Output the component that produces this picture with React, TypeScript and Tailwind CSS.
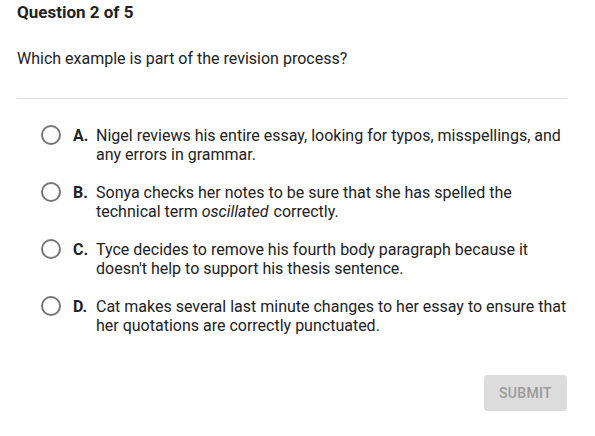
import React from 'react';

const options = [
  { letter: 'A.', text: <>Nigel reviews his entire essay, looking for typos, misspellings, and any errors in grammar.</> },
  { letter: 'B.', text: <>Sonya checks her notes to be sure that she has spelled the technical term <i className="pr-[1px]">oscillated</i> correctly.</> },
  { letter: 'C.', text: <>Tyce decides to remove his fourth body paragraph because it doesn't help to support his thesis sentence.</> },
  { letter: 'D.', text: <>Cat makes several last minute changes to her essay to ensure that her quotations are correctly punctuated.</> },
];

const App = () => {
  return (
    <div className="w-[595px] h-[436px] bg-white text-[#222] font-['Roboto',sans-serif]">
      <div className="px-[17px] w-[584px]">
        <h1 className="text-[17px] font-bold leading-[24px]">Question 2 of 5</h1>
        <p className="text-[16px] leading-[20px] mt-[25px]">Which example is part of the revision process?</p>
        <div className="border-b border-[#dcdcdc] mt-[29px] w-[550px]" />

        {/* Answer choices */}
        <div className="pl-[24px] pt-[27px] flex flex-col gap-[19px]">
          {options.map((o) => (
            <div key={o.letter} className="flex items-start">
              <div className="w-[20px] h-[20px] rounded-full border-2 border-[#777] mt-[-1px] shrink-0" />
              <div className="flex ml-[12px] text-[16px] leading-[19px]">
                <span className="font-bold w-[23px] shrink-0">{o.letter}</span>
                <span>{o.text}</span>
              </div>
            </div>
          ))}
        </div>

        <div className="flex justify-end mt-[40px] w-[550px]">
          <button className="w-[83px] h-[36px] rounded-[4px] bg-[#dcdcdc] text-[#9a9a9a] text-[14px] font-medium tracking-[0.3px]">
            SUBMIT
          </button>
        </div>
      </div>
    </div>
  );
};

export default App;
